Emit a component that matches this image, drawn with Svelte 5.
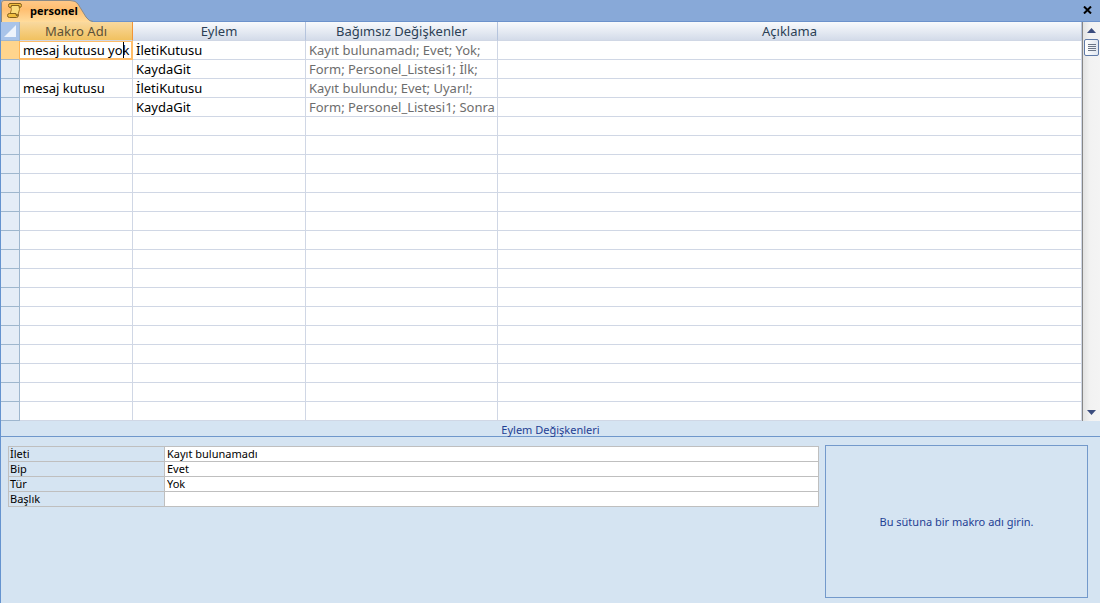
<script>
  let rows = $state([
    { name: 'mesaj kutusu yok', action: 'İletiKutusu', args: 'Kayıt bulunamadı; Evet; Yok;' },
    { name: '', action: 'KaydaGit', args: 'Form; Personel_Listesi1; İlk;' },
    { name: 'mesaj kutusu', action: 'İletiKutusu', args: 'Kayıt bulundu; Evet; Uyarı!;' },
    { name: '', action: 'KaydaGit', args: 'Form; Personel_Listesi1; Sonra' },
    ...Array.from({ length: 16 }, () => ({ name: '', action: '', args: '' }))
  ]);

  let props = $state([
    { id: 'ileti', label: 'İleti', value: 'Kayıt bulunamadı' },
    { id: 'bip', label: 'Bip', value: 'Evet' },
    { id: 'tur', label: 'Tür', value: 'Yok' },
    { id: 'baslik', label: 'Başlık', value: '' }
  ]);

  let current = $state(0);
</script>

<main>
  <header>
    <button class="tab">
      <svg class="tab-shape" width="94" height="22" viewBox="0 0 94 22" aria-hidden="true">
        <defs>
          <linearGradient id="tabfill" x1="0" y1="0" x2="0" y2="1">
            <stop offset="0" stop-color="#ffc98a" />
            <stop offset="0.4" stop-color="#ffbe70" />
            <stop offset="1" stop-color="#ffdc9c" />
          </linearGradient>
        </defs>
        <path d="M0 22V3Q0 0.5 3 0.5H69Q75 0.5 77 4L85 17Q88 21.5 92 22Z" fill="url(#tabfill)" />
        <path d="M0.5 22V3Q0.5 0.5 3 0.5H69Q75 0.5 77 4L85 17Q88 21.5 92 21.5" fill="none" stroke="#8b8a86" />
      </svg>
      <svg class="scroll-icon" width="15" height="15" viewBox="0 0 15 15" aria-hidden="true">
        <path d="M3.5 2.5Q5.5 6 3 11.5H11Q13.500 6 12 2.5Z" fill="#fbdc7c" stroke="#a87a22" />
        <path d="M3 0.5H13Q14.5 0.5 14.5 2.5Q14.5 4.5 12.5 4.5L12 2.5H4.500Q4.500 4.500 3 4.500Q1.500 4.500 1.500 2.500Q1.500 0.500 3 0.500Z" fill="#f0bd3e" stroke="#84601c" />
        <path d="M2.5 10.5H9Q8.500 12.500 10 13Q11 13 11.500 11.500Q11.500 14.500 9.500 14.500H2.5Q0.500 14.500 0.500 12.500Q0.500 10.500 2.500 10.500Z" fill="#f0bd3e" stroke="#84601c" />
      </svg>
      <span>personel</span>
    </button>
    <button class="close" aria-label="Kapat">
      <svg width="9" height="8" viewBox="0 0 9 8"><path d="M1 0.5L8 7.5M8 0.5L1 7.5" stroke="#000" stroke-width="2" /></svg>
    </button>
  </header>

  <div class="sheet">
    <table class="macro">
      <colgroup>
        <col class="c-sel" />
        <col class="c-name" />
        <col class="c-action" />
        <col class="c-args" />
        <col />
      </colgroup>
      <thead>
        <tr>
          <th class="corner">
            <svg width="12" height="12" viewBox="0 0 12 12" aria-hidden="true"><path d="M12 0V12H0Z" fill="#eef4fc" /></svg>
          </th>
          <th class="active">Makro Adı</th>
          <th>Eylem</th>
          <th>Bağımsız Değişkenler</th>
          <th>Açıklama</th>
        </tr>
      </thead>
      <tbody>
        {#each rows as row, i}
          <tr class:current={i === current}>
            <td class="sel"></td>
            <td class="name">
              <input bind:value={row.name} onfocus={() => (current = i)} aria-label="Makro Adı {i + 1}" />
              {#if i === 0}<span class="caret"></span>{/if}
            </td>
            <td>{row.action}</td>
            <td class="args">{row.args}</td>
            <td></td>
          </tr>
        {/each}
      </tbody>
    </table>

    <div class="scrollbar">
      <button class="arrow" aria-label="Yukarı">
        <svg width="9" height="5" viewBox="0 0 9 5"><path d="M4.5 0L9 5H0Z" fill="#3c4d7e" /></svg>
      </button>
      <div class="thumb"><i></i><i></i><i></i><i></i></div>
      <div class="track"></div>
      <button class="arrow" aria-label="Aşağı">
        <svg width="9" height="5" viewBox="0 0 9 5"><path d="M0 0H9L4.5 5Z" fill="#3c4d7e" /></svg>
      </button>
    </div>
  </div>

  <h2>Eylem Değişkenleri</h2>

  <section class="details">
    <table class="props">
      <tbody>
        {#each props as p (p.id)}
          <tr>
            <th><label for={p.id}>{p.label}</label></th>
            <td><input id={p.id} bind:value={p.value} /></td>
          </tr>
        {/each}
      </tbody>
    </table>
    <aside>Bu sütuna bir makro adı girin.</aside>
  </section>
</main>

<style>
  :global(body) {
    margin: 0;
    background: #d5e4f2;
  }

  main {
    box-sizing: border-box;
    min-height: 100vh;
    display: flex;
    flex-direction: column;
    border-left: 1px solid #6593cf;
    background: #d5e4f2;
    font-family: 'Noto Sans', 'Open Sans', sans-serif;
    font-size: 11px;
    color: #000;
  }

  button {
    border: none;
    padding: 0;
    background: none;
    font: inherit;
    color: inherit;
  }

  input {
    box-sizing: border-box;
    display: block;
    width: 100%;
    border: none;
    outline: none;
    margin: 0;
    padding: 0;
    background: transparent;
    font: inherit;
    color: inherit;
  }

  header {
    display: flex;
    justify-content: space-between;
    align-items: center;
    height: 22px;
    box-sizing: border-box;
    background: #88a9d8;
    box-shadow: inset 0 -1px #6c92cb;
  }

  .tab {
    position: relative;
    display: flex;
    align-items: center;
    gap: 8px;
    height: 22px;
    padding: 0 0 2px 6px;
    box-sizing: border-box;
    font-family: 'Open Sans', 'Noto Sans', sans-serif;
    font-weight: bold;
  }

  .tab-shape {
    position: absolute;
    left: 0;
    top: 0;
  }

  .tab .scroll-icon,
  .tab span {
    position: relative;
  }

  .close {
    display: flex;
    padding: 0 8px 2px;
  }

  .sheet {
    display: flex;
    background: #fff;
  }

  .macro {
    flex: 1;
    width: 100%;
    table-layout: fixed;
    border-spacing: 0;
    border-right: 1px solid #868686;
    font-size: 13px;
    line-height: 18px;
  }

  .c-sel {
    width: 19px;
  }

  .c-name {
    width: 113px;
  }

  .c-action {
    width: 173px;
  }

  .c-args {
    width: 192px;
  }

  .macro th,
  .macro td {
    box-sizing: border-box;
    height: 19px;
    padding: 0 0 0 3px;
    border-right: 1px solid #d0d7e5;
    border-bottom: 1px solid #d0d7e5;
    overflow: hidden;
    white-space: nowrap;
  }

  .macro th {
    padding: 0;
    border-right-color: #b5c4dd;
    background: linear-gradient(#f8fafc, #e6ebf3 50%, #d3dbe9);
    font-weight: normal;
    color: #2b3f55;
  }

  .macro th.active {
    border-right-color: #f29536;
    background: linear-gradient(#f9d99f, #f1c15f);
    color: #5c5138;
  }

  .macro th.corner {
    background: #a9c4e9;
    border-color: #9eb6ce;
    line-height: 0;
  }

  .macro td.sel {
    background: #e4ecf7;
    border-color: #9eb6ce;
  }

  .macro .current .sel {
    background: #ffd58d;
    border-right-color: #ffb757;
  }

  .macro td.args {
    color: #6d6d6d;
  }

  .macro td.name {
    position: relative;
  }

  .name input {
    height: 18px;
  }

  .macro .current .name {
    box-shadow: inset 0 1px #ffbd69, inset 0 -1px #ffbd69, inset -1px 0 #ffbd69;
    border-right-color: #ffbd69;
    border-bottom-color: #ffbd69;
  }

  .caret {
    position: absolute;
    right: 8px;
    top: 1px;
    width: 1px;
    height: 16px;
    background: #000;
  }

  .scrollbar {
    display: flex;
    flex-direction: column;
    align-items: center;
    width: 17px;
    background: linear-gradient(90deg, #e3e3e3, #f2f2f2 40%, #f4f4f4);
  }

  .arrow {
    display: flex;
    align-items: center;
    justify-content: center;
    width: 17px;
    height: 17px;
  }

  .thumb {
    box-sizing: border-box;
    display: flex;
    flex-direction: column;
    justify-content: center;
    align-items: center;
    gap: 1px;
    width: 15px;
    height: 17px;
    border: 1px solid #5f7aa8;
    border-radius: 2px;
    background: linear-gradient(90deg, #fff, #e1e7f0);
  }

  .thumb i {
    width: 8px;
    height: 1px;
    background: #6c7688;
  }

  .track {
    flex: 1;
  }

  h2 {
    margin: 0;
    height: 15px;
    border-bottom: 1px solid #6f97cb;
    line-height: 17px;
    font-size: 11px;
    font-weight: normal;
    text-align: center;
    color: #1f3f94;
  }

  .details {
    flex: 1;
    display: flex;
    align-items: stretch;
    gap: 6px;
    padding: 8px 12px 5px 7px;
  }

  .props {
    flex: 1;
    align-self: flex-start;
    margin-top: 1px;
    table-layout: fixed;
    width: 100%;
    border-collapse: collapse;
    line-height: 14px;
  }

  .props th,
  .props td {
    height: 14px;
    padding: 0 1px;
    border: 1px solid #bfbfbf;
    font-weight: normal;
    text-align: left;
  }

  .props th {
    width: 153px;
  }

  .props td {
    padding-left: 2px;
    background: #fff;
  }

  .props label {
    display: block;
  }

  .props input {
    height: 14px;
  }

  aside {
    box-sizing: border-box;
    display: flex;
    align-items: center;
    justify-content: center;
    width: 263px;
    border: 1px solid #7399cb;
    color: #1f3f94;
  }
</style>
